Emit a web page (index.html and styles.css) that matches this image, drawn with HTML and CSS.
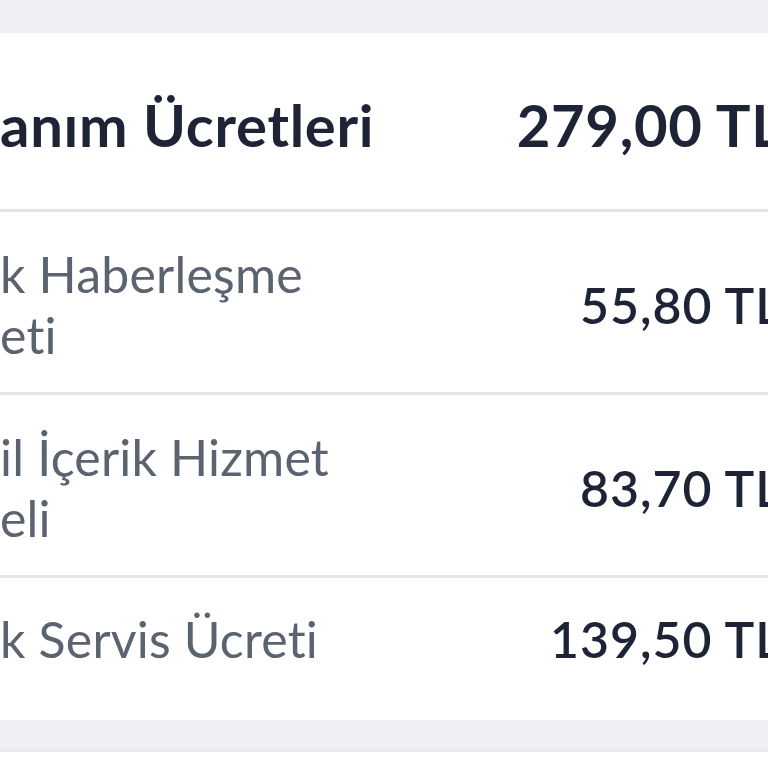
FILE: index.html
```html
<!DOCTYPE html>
<html lang="tr">
<head>
<meta charset="UTF-8">
<meta name="viewport" content="width=device-width, initial-scale=1.0">
<title>Fatura Detayı</title>
<link rel="stylesheet" href="styles.css">
</head>
<body>

<div class="gap-top"></div>

<div class="card">

    <div class="row row-head">
        <span class="label">anım Ücretleri</span>
        <span class="amount">279,00 TL</span>
    </div>

    <div class="row">
        <span class="label">k Haberleşme<br>eti</span>
        <span class="amount">55,80 TL</span>
    </div>

    <div class="row">
        <span class="label">il İçerik Hizmet<br>eli</span>
        <span class="amount">83,70 TL</span>
    </div>

    <div class="row row-last">
        <span class="label">k Servis Ücreti</span>
        <span class="amount">139,50 TL</span>
    </div>

</div>

<div class="gap-bottom"></div>

</body>
</html>
```

FILE: styles.css
```css
*{
    margin:0;
    padding:0;
    box-sizing:border-box;
}

body{
    background:#ffffff;
    font-family:Lato,"Noto Sans",sans-serif;
    overflow:hidden;
    width:768px;
    height:768px;
}

.gap-top{
    height:33px;
    background:#eff0f3;
}

.card{
    background:white;
}

.row{
    display:flex;
    justify-content:space-between;
    align-items:center;
    height:183px;
    padding-top:6px;
    border-bottom:3px solid #e3e5ea;
    margin-right:-14px;
}

.row-head{
    height:179px;
}

.row-last{
    height:142px;
    padding-top:0;
    padding-bottom:20px;
    border-bottom:none;
}

.label{
    font-size:50px;
    line-height:61px;
    color:#5b6270;
    letter-spacing:0.2px;
}

.amount{
    font-size:50px;
    font-weight:600;
    color:#1e2435;
    letter-spacing:1px;
}

.row-head .label,
.row-head .amount{
    font-size:58px;
    font-weight:700;
    color:#1e2435;
    letter-spacing:0.7px;
}

.gap-bottom{
    height:32px;
    background:#eff0f3;
    border-bottom:3px solid #e9eaee;
}
```
